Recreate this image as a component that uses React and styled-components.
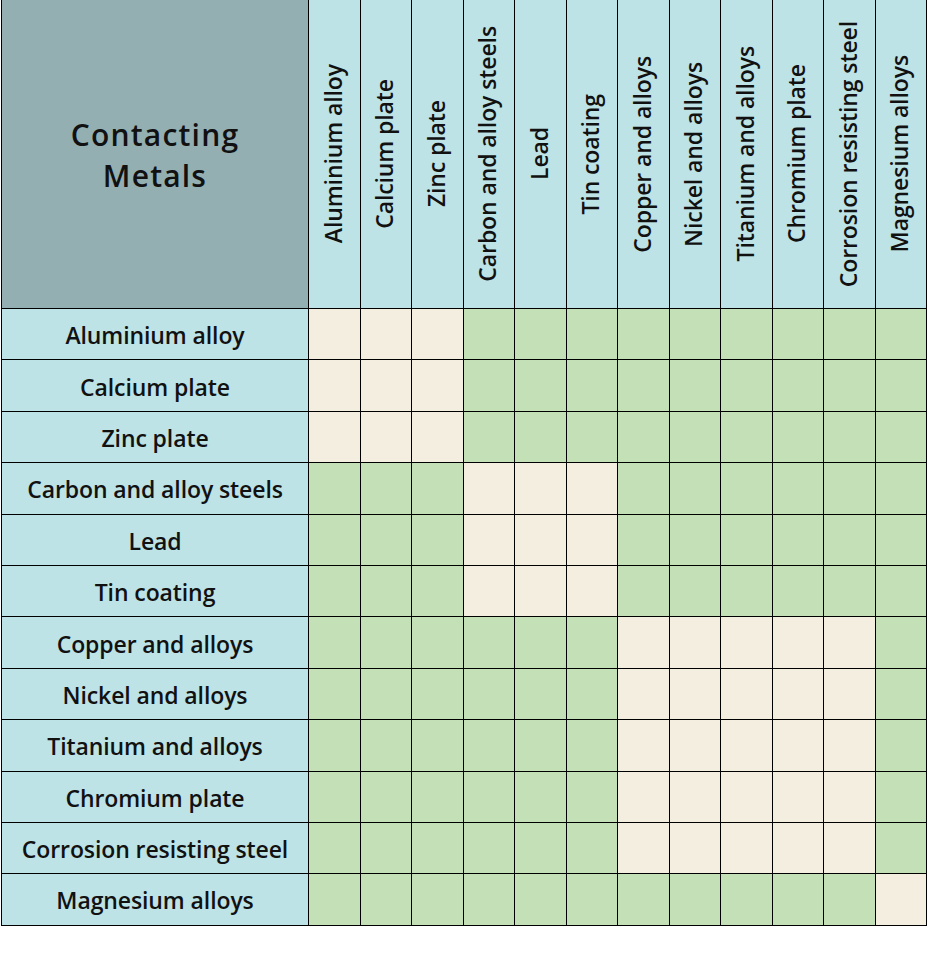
import React from 'react';
import styled, { createGlobalStyle } from 'styled-components';

const GlobalStyle = createGlobalStyle`
  html, body {
    margin: 0;
    padding: 0;
    background: #ffffff;
  }
  body {
    font-family: "Open Sans", "Noto Sans", sans-serif;
    color: #111;
  }
`;

const metals = [
  { name: 'Aluminium alloy', group: 0 },
  { name: 'Calcium plate', group: 0 },
  { name: 'Zinc plate', group: 0 },
  { name: 'Carbon and alloy steels', group: 1 },
  { name: 'Lead', group: 1 },
  { name: 'Tin coating', group: 1 },
  { name: 'Copper and alloys', group: 2 },
  { name: 'Nickel and alloys', group: 2 },
  { name: 'Titanium and alloys', group: 2 },
  { name: 'Chromium plate', group: 2 },
  { name: 'Corrosion resisting steel', group: 2 },
  { name: 'Magnesium alloys', group: 3 },
];

const Grid = styled.div`
  display: grid;
  grid-template-columns: 306px repeat(12, 50.5px);
  grid-template-rows: 308px repeat(12, 50.4px);
  gap: 1px;
  padding: 1px;
  width: max-content;
  background: #000;
  margin: -1px 0 0 1px;
`;

const Corner = styled.div`
  background: #93afb2;
  display: flex;
  align-items: center;
  justify-content: center;
  text-align: center;
  font-size: 30px;
  font-weight: 600;
  letter-spacing: 1.2px;
  line-height: 41px;
  padding-top: 2px;
`;

const ColHead = styled.div`
  background: #bde3e6;
  display: flex;
  align-items: center;
  justify-content: center;
  overflow: hidden;

  & span {
    writing-mode: vertical-rl;
    transform: rotate(180deg);
    white-space: nowrap;
    font-size: 23px;
    font-weight: 600;
    letter-spacing: -0.1px;
    line-height: 1;
    padding-left: 2px;
  }
`;

const RowHead = styled.div`
  background: #bde3e6;
  display: flex;
  align-items: center;
  justify-content: center;
  white-space: nowrap;
  font-size: 23px;
  font-weight: 600;
  letter-spacing: -0.1px;
  padding-top: 2px;
`;

const Cell = styled.div`
  background: ${(p) => (p.$same ? '#f4eee0' : '#c3e0b7')};
`;

export default function App() {
  return (
    <>
      <GlobalStyle />
      <Grid>
        <Corner>
          Contacting
          <br />
          Metals
        </Corner>
        {metals.map((m) => (
          <ColHead key={m.name}>
            <span>{m.name}</span>
          </ColHead>
        ))}
        {metals.map((row) => (
          <React.Fragment key={row.name}>
            <RowHead>{row.name}</RowHead>
            {metals.map((col) => (
              <Cell key={col.name} $same={row.group === col.group} />
            ))}
          </React.Fragment>
        ))}
      </Grid>
    </>
  );
}
